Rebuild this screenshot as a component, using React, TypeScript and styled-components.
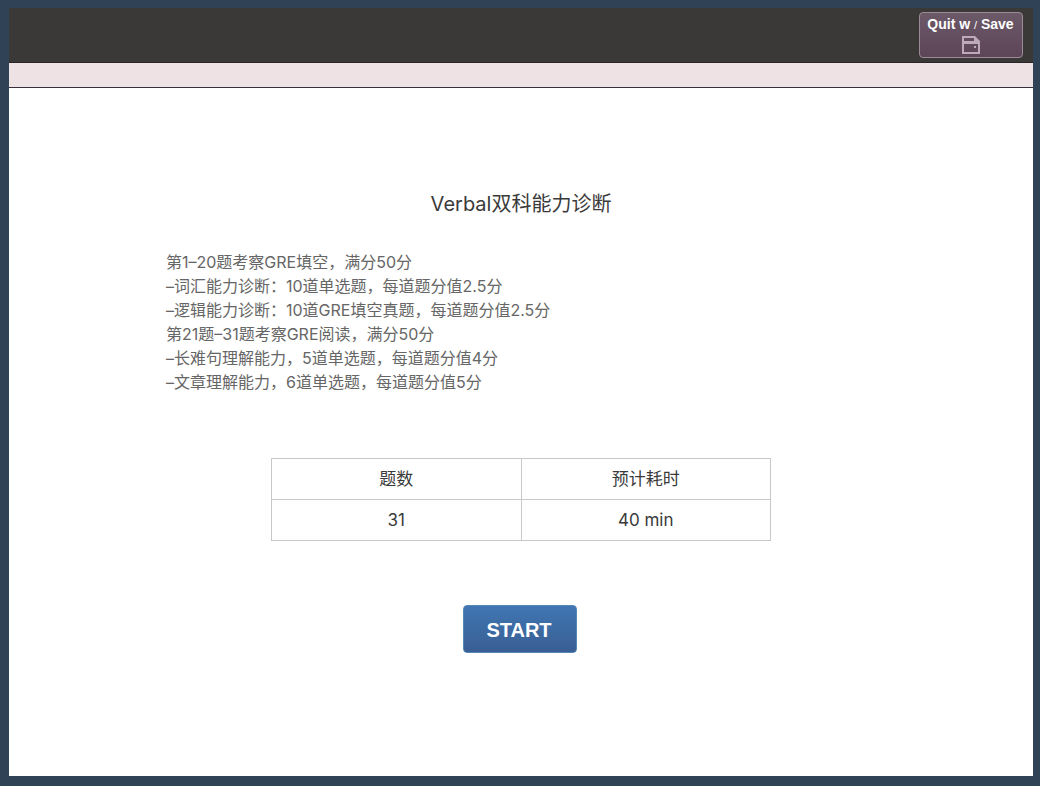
import React from 'react';
import styled, { createGlobalStyle } from 'styled-components';

const GlobalStyle = createGlobalStyle`
  *, *::before, *::after { box-sizing: border-box; }
  body {
    margin: 0;
    background: #304255;
    font-family: Inter, "Noto Sans CJK SC", sans-serif;
    color: #3a3a3a;
  }
`;

const Frame = styled.div`
  display: flex;
  flex-direction: column;
  min-height: 100vh;
  padding: 8px 7px 10px 9px;
`;

const TopBar = styled.header`
  display: flex;
  justify-content: flex-end;
  align-items: flex-start;
  height: 55px;
  padding: 4px 10px 0 0;
  background: #3b3937;
  border-bottom: 1px solid #292629;
`;

const SubBar = styled.div`
  height: 25px;
  background: #efe2e4;
  border-bottom: 1px solid #37303a;
`;

const QuitButton = styled.button`
  display: flex;
  flex-direction: column;
  align-items: center;
  width: 104px;
  height: 46px;
  padding: 2px 1px 0 0;
  border: 1px solid #9c8a97;
  border-radius: 4px;
  background: linear-gradient(#6b5968, #5d4558);
  color: #fff;
  font: bold 14px/18px "Liberation Sans", sans-serif;
  cursor: pointer;
`;

const Slash = styled.span`
  font-weight: 400;
  font-size: 11px;
`;

const SaveIcon = styled.svg`
  display: block;
  margin-top: 2px;
`;

const Content = styled.main`
  flex: 1;
  display: flex;
  flex-direction: column;
  align-items: center;
  padding: 101px 24px 24px;
  background: #fff;
`;

const Title = styled.h1`
  margin: 0;
  font-size: 20px;
  font-weight: 400;
  line-height: 30px;
`;

const Description = styled.div`
  width: 100%;
  max-width: 710px;
  margin-top: 31px;
  color: #666;
  font-size: 16px;
  line-height: 24px;
`;

const Line = styled.p`
  margin: 0;
`;

const Summary = styled.table`
  width: 100%;
  max-width: 500px;
  margin-top: 64px;
  border-collapse: collapse;
  table-layout: fixed;
  font-size: 17px;
  line-height: 24px;
  text-align: center;

  th, td {
    height: 41px;
    padding: 0;
    border: 1px solid #c8c8c8;
    font-weight: 400;
  }
`;

const Actions = styled.div`
  display: flex;
  justify-content: center;
  margin-top: 64px;
  padding-right: 2px;
`;

const StartButton = styled.button`
  width: 114px;
  height: 48px;
  padding: 2px 2px 0 0;
  border: 1px solid #5586b4;
  border-radius: 4px;
  background: linear-gradient(#4076b2, #395f94);
  color: #fff;
  font: bold 20px/24px "Liberation Sans", sans-serif;
  cursor: pointer;
`;

const lines = [
  '第1–20题考察GRE填空，满分50分',
  '–词汇能力诊断：10道单选题，每道题分值2.5分',
  '–逻辑能力诊断：10道GRE填空真题，每道题分值2.5分',
  '第21题–31题考察GRE阅读，满分50分',
  '–长难句理解能力，5道单选题，每道题分值4分',
  '–文章理解能力，6道单选题，每道题分值5分',
];

export default function App() {
  return (
    <>
      <GlobalStyle />
      <Frame lang="zh-CN">
        <TopBar>
          <QuitButton type="button">
            <span>Quit w <Slash>/</Slash> Save</span>
            <SaveIcon width="18" height="18" viewBox="0 0 18 18" aria-hidden="true">
              <path
                fill="#bcaaba"
                fillRule="evenodd"
                d="M0 0H13L18 5V18H0ZM2 2V5H12V2ZM2 8V16H16V8ZM12 10H14V12H12Z"
              />
            </SaveIcon>
          </QuitButton>
        </TopBar>
        <SubBar />
        <Content>
          <Title>Verbal双科能力诊断</Title>
          <Description>
            {lines.map((line) => (
              <Line key={line}>{line}</Line>
            ))}
          </Description>
          <Summary>
            <thead>
              <tr>
                <th scope="col">题数</th>
                <th scope="col">预计耗时</th>
              </tr>
            </thead>
            <tbody>
              <tr>
                <td>31</td>
                <td>40 min</td>
              </tr>
            </tbody>
          </Summary>
          <Actions>
            <StartButton type="button">START</StartButton>
          </Actions>
        </Content>
      </Frame>
    </>
  );
}
